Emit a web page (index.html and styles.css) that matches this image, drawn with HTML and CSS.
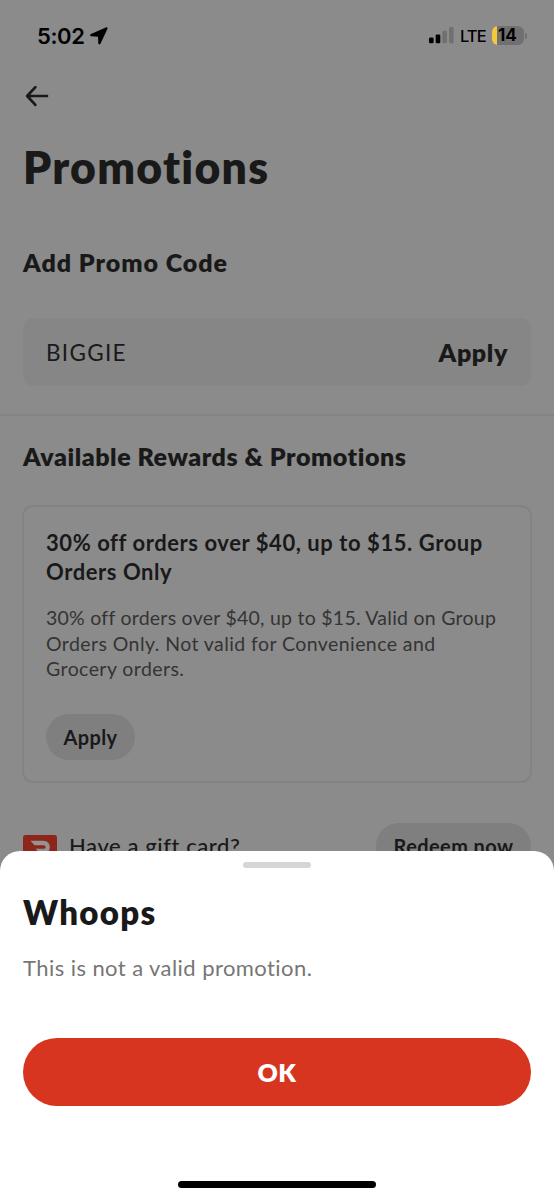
FILE: index.html
```html
<!DOCTYPE html>
<html lang="en">
<head>
<meta charset="utf-8">
<title>Promotions</title>
<link rel="stylesheet" href="styles.css">
</head>
<body>
<div class="screen">
  <header class="status">
    <div class="status-left">
      <span class="time">5:02</span>
      <svg class="location" width="18" height="18" viewBox="0 0 18 18"><path d="M15.800 0.400 L1 7 C-.3 7.700 0 9.200 1.300 9.300 L8 9.700 L8.300 16.300 C8.400 17.700 9.800 17.900 10.400 16.700 L17.400 2 C17.900 .8 17 -.1 15.800 .4 Z"/></svg>
    </div>
    <div class="status-right">
      <svg class="signal" width="25" height="17" viewBox="0 0 25 17"><g fill="#000"><rect x="0" y="10.500" width="4.600" height="5.700" rx="1.300"/><rect x="6.700" y="7.500" width="4.600" height="8.700" rx="1.300"/></g><g fill="#707070"><rect x="13.400" y="3.800" width="4.500" height="12.400" rx="1.300"/><rect x="20.100" y="0" width="4.500" height="16.200" rx="1.300"/></g></svg>
      <span class="network">LTE</span>
      <div class="battery"><span class="battery-level">14</span></div>
      <span class="battery-tip"></span>
    </div>
  </header>

  <main class="page">
    <svg class="back" width="24" height="22" viewBox="0 0 24 22"><path d="M10.400 2.200 L2.200 11 L10.400 19.800 M2.400 11 H22" fill="none" stroke="#191919" stroke-width="2.700" stroke-linecap="round" stroke-linejoin="round"/></svg>
    <h1 class="title">Promotions</h1>
    <h2 class="heading heading-code">Add Promo Code</h2>
    <div class="code-field">
      <span class="code">BIGGIE</span>
      <span class="code-apply">Apply</span>
    </div>
  </main>
  <section class="rewards">
    <h2 class="heading heading-rewards">Available Rewards &amp; Promotions</h2>
    <article class="card">
      <h3 class="card-title">30% off orders over $40, up to $15. Group<br>Orders Only</h3>
      <p class="card-text"><span class="tight">30% off orders over $40, up to $15. Valid on Group</span><br>Orders Only. Not valid for Convenience and<br>Grocery orders.</p>
      <button class="pill card-apply">Apply</button>
    </article>
    <div class="gift">
      <svg class="gift-icon" width="34" height="24" viewBox="0 0 34 24"><rect width="34" height="24" rx="2.500" fill="#8c261b"/><path d="M7.500 5.800 H20 C24.500 5.800 26.800 8.800 26.800 12 C26.800 16 24 19 20 19 H17.500 L12.500 13.800 H20.500 C23.300 13.800 23.300 10.200 20.500 10.200 H11.500 Z" fill="#979190"/></svg>
      <span class="gift-label">Have a gift card?</span>
      <button class="pill redeem">Redeem now</button>
    </div>
  </section>

  <section class="sheet" role="dialog">
    <div class="grabber"></div>
    <h2 class="sheet-title">Whoops</h2>
    <p class="sheet-text">This is not a valid promotion.</p>
    <button class="ok">OK</button>
    <div class="home-bar"></div>
  </section>
</div>
</body>
</html>
```
FILE: styles.css
```css
* { box-sizing: border-box; margin: 0; padding: 0; }
body { background: #8b8b8b; }
button { border: 0; font-family: inherit; }
.screen {
  position: relative;
  width: 554px;
  height: 1200px;
  overflow: hidden;
  background: #8b8b8b;
  color: #191919;
  font-family: Lato, "Open Sans", sans-serif;
  font-variant-ligatures: none;
  white-space: nowrap;
}
.status {
  display: flex;
  justify-content: space-between;
  align-items: center;
  height: 71px;
  padding: 0 27px 0 37px;
  color: #000;
  font-family: Inter, "Liberation Sans", sans-serif;
}
.status-left, .status-right { display: flex; align-items: center; }
.time { font-size: 22px; font-weight: 600; line-height: 28px; letter-spacing: -0.4px; }
.location { margin-left: 6px; }
.network { width: 25px; margin-left: 6px; font-size: 16.500px; font-weight: 500; line-height: 22px; letter-spacing: -0.9px; }
.battery {
  width: 32px;
  height: 19px;
  margin-left: 7px;
  padding-left: 6px;
  border-radius: 6px;
  background: linear-gradient(90deg, #f5c83b 5px, #707070 5px);
}
.battery-level { display: block; font-size: 17px; font-weight: 700; line-height: 19px; }
.battery-tip { width: 2px; height: 6px; margin-left: 1px; border-radius: 0 2px 2px 0; background: #707070; }

.page { padding: 14px 23px 28px; border-bottom: 2px solid #838383; }
.back { display: block; margin-left: 2px; }
.title { margin-top: 32px; font-size: 44.500px; font-weight: 800; line-height: 56px; letter-spacing: 1.250px; }
.heading { font-size: 25px; font-weight: 800; line-height: 32px; }
.heading-code { margin-top: 51px; letter-spacing: 0.950px; }
.code-field {
  display: flex;
  justify-content: space-between;
  align-items: center;
  height: 68px;
  margin-top: 40px;
  padding: 0 23px;
  border-radius: 10px;
  background: #868686;
}
.code { padding-top: 1px; font-size: 22.500px; line-height: 28px; letter-spacing: 1.300px; }
.code-apply { font-size: 25px; font-weight: 800; line-height: 28px; letter-spacing: 0.600px; }

.rewards { padding: 24px 22px 0; }
.heading-rewards { padding-left: 1px; letter-spacing: 0.550px; }
.card {
  height: 278px;
  margin-top: 33px;
  padding: 21px 22px;
  border: 2px solid #838383;
  border-radius: 11px;
}
.card-title { font-size: 22px; font-weight: 700; line-height: 29px; letter-spacing: 0.570px; }
.card-text { margin-top: 19px; color: #343434; font-size: 19.500px; line-height: 25.700px; letter-spacing: 0.420px; }
.tight { letter-spacing: 0.250px; }
.pill { height: 46px; border-radius: 23px; background: #7f7f7f; color: #191919; font-size: 20px; font-weight: 700; letter-spacing: 0.400px; }
.card-apply { display: block; width: 89px; margin-top: 32px; }
.gift { display: flex; align-items: center; height: 46px; margin-top: 40px; padding-left: 1px; }
.gift-icon { margin-top: 2px; }
.gift-label { margin-left: 12px; font-size: 22px; font-weight: 500; line-height: 28px; letter-spacing: 0.580px; }
.redeem { width: 155px; margin-left: auto; margin-right: 1px; }

.sheet {
  position: absolute;
  left: 0;
  right: 0;
  bottom: 0;
  height: 349px;
  padding: 11px 23px 0;
  border-radius: 20px 20px 0 0;
  background: #fff;
}
.grabber { width: 68px; height: 6px; margin: 0 auto; border-radius: 3px; background: #d6d6d6; }
.sheet-title { margin-top: 24px; font-size: 33px; font-weight: 800; line-height: 40px; letter-spacing: 1.300px; }
.sheet-text { margin-top: 22px; color: #767676; font-size: 22px; line-height: 28px; letter-spacing: 0.430px; }
.ok {
  display: block;
  width: 508px;
  height: 68px;
  margin-top: 56px;
  border-radius: 34px;
  background: #d83520;
  color: #fff;
  font-size: 25px;
  font-weight: 800;
  letter-spacing: 0.500px;
}
.home-bar { width: 198px; height: 7px; margin: 75px auto 0; border-radius: 4px; background: #000; }
```
